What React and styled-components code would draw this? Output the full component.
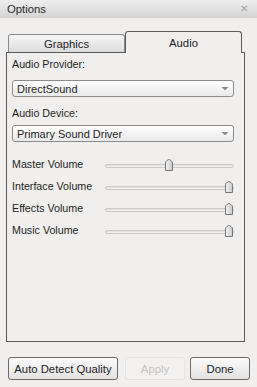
import React from "react";
import styled, { createGlobalStyle } from "styled-components";

const GlobalStyle = createGlobalStyle`
  html, body {
    margin: 0;
    padding: 0;
    background: #f0efed;
  }
  body {
    font-family: "Liberation Sans", Arial, sans-serif;
    font-size: 10.7px;
    color: #1e1e1e;
  }
`;

const Window = styled.div`
  width: 257px;
  height: 387px;
  background: #f0efed;
  display: flex;
  flex-direction: column;
`;

const TitleBar = styled.div`
  height: 18px;
  display: flex;
  align-items: center;
  justify-content: space-between;
  padding: 0 9px 0 7px;
  background: linear-gradient(#eeeeee, #d3d3d3);
  font-size: 11.3px;
  color: #2a2a2a;
`;

const Close = styled.span`
  color: #a0a0a0;
  font-size: 10px;
  line-height: 1;
`;

const TabRow = styled.div`
  height: 21px;
  margin-top: 13px;
  padding-left: 8px;
  display: flex;
  align-items: flex-end;
`;

const Tab = styled.div`
  width: 117px;
  height: ${(p) => (p.$active ? 22 : 18)}px;
  box-sizing: border-box;
  display: flex;
  align-items: center;
  justify-content: center;
  border: 1px solid ${(p) => (p.$active ? "#5a5a5a" : "#8a8a8a")};
  border-bottom: none;
  border-radius: 3px 3px 0 0;
  background: ${(p) =>
    p.$active ? "#f0efed" : "linear-gradient(#f6f6f6, #dcdcdc)"};
  margin-bottom: ${(p) => (p.$active ? -1 : 0)}px;
  padding-top: ${(p) => (p.$active ? 1 : 0)}px;
  position: relative;
  z-index: ${(p) => (p.$active ? 1 : 0)};
  font-size: 11.3px;
`;

const Panel = styled.div`
  margin-left: 6px;
  width: 239px;
  height: 290px;
  box-sizing: border-box;
  border: 1px solid #5a5a5a;
  padding: 4px 10px 0 5px;
  display: flex;
  flex-direction: column;
`;

const Label = styled.div`
  line-height: 14px;
  margin-top: ${(p) => p.$mt || 0}px;
`;

const Select = styled.div`
  height: 17px;
  box-sizing: border-box;
  margin-top: ${(p) => p.$mt || 0}px;
  border: 1px solid #8c8c8c;
  border-radius: 3px;
  background: linear-gradient(#ffffff, #e9e9e9);
  display: flex;
  align-items: center;
  justify-content: space-between;
  padding: 0 4px 0 4px;
  line-height: 14px;
  font-size: 11px;
`;

const Arrow = () => (
  <svg width="8" height="5" viewBox="0 0 8 5">
    <path d="M0.5 1 H7.5 L4.5 4 H3.5 Z" fill="#8a8a8a" />
  </svg>
);

const Sliders = styled.div`
  margin-top: 11px;
  display: flex;
  flex-direction: column;
`;

const SliderRow = styled.div`
  height: 22px;
  display: flex;
  align-items: center;
`;

const SliderLabel = styled.div`
  width: 93px;
  line-height: 14px;
`;

const Slider = styled.div`
  flex: 1;
  height: 12px;
  margin-top: 2px;
  position: relative;
`;

const Track = styled.div`
  position: absolute;
  left: 0;
  right: 0;
  top: 5px;
  height: 4px;
  box-sizing: border-box;
  border: 1px solid #cbcbcb;
  border-radius: 2px;
  background: linear-gradient(#dcdcdc, #f6f6f6);
`;

const Thumb = styled.svg`
  position: absolute;
  top: 0;
`;

const ButtonRow = styled.div`
  margin-top: 15px;
  padding-left: 8px;
  display: flex;
`;

const Button = styled.div`
  width: ${(p) => p.$w}px;
  height: 23px;
  box-sizing: border-box;
  margin-left: ${(p) => p.$ml || 0}px;
  display: flex;
  align-items: center;
  justify-content: center;
  border: 1px solid ${(p) => (p.$disabled ? "#e4e4e4" : "#6a6a6a")};
  border-radius: 3px;
  background: ${(p) =>
    p.$disabled ? "#f2f1ef" : "linear-gradient(#fbfbfb, #e2e2e2)"};
  color: ${(p) => (p.$disabled ? "#c4c4c4" : "#1e1e1e")};
  font-size: 11.3px;
`;

const volumes = [
  { name: "Master Volume", value: 0.5 },
  { name: "Interface Volume", value: 1 },
  { name: "Effects Volume", value: 1 },
  { name: "Music Volume", value: 1 },
];

const TRACK_W = 129;
const THUMB_W = 8;

const App = () => {
  return (
    <Window>
      <GlobalStyle />
      <TitleBar>
        <span>Options</span>
        <Close>✕</Close>
      </TitleBar>
      <TabRow>
        <Tab>Graphics</Tab>
        <Tab $active>Audio</Tab>
      </TabRow>
      <Panel>
        <Label>Audio Provider:</Label>
        <Select $mt={9}>
          <span>DirectSound</span>
          <Arrow />
        </Select>
        <Label $mt={9}>Audio Device:</Label>
        <Select $mt={5}>
          <span>Primary Sound Driver</span>
          <Arrow />
        </Select>
        <Sliders>
          {volumes.map((v) => (
            <SliderRow key={v.name}>
              <SliderLabel>{v.name}</SliderLabel>
              <Slider>
                <Track />
                <Thumb
                  width="8"
                  height="12"
                  viewBox="0 0 8 12"
                  style={{ left: Math.round(v.value * (TRACK_W - THUMB_W - 1)) }}
                >
                  <defs>
                    <linearGradient id="tg" x1="0" y1="0" x2="1" y2="0">
                      <stop offset="0" stopColor="#f4f4f4" />
                      <stop offset="1" stopColor="#c9c9c9" />
                    </linearGradient>
                  </defs>
                  <path
                    d="M0.5 11.5 V4 Q0.5 2.6 1.8 1.7 L3.4 0.6 H4.6 L6.2 1.7 Q7.5 2.6 7.5 4 V11.5 Z"
                    fill="url(#tg)"
                    stroke="#777"
                    strokeWidth="1"
                  />
                </Thumb>
              </Slider>
            </SliderRow>
          ))}
        </Sliders>
      </Panel>
      <ButtonRow>
        <Button $w={110}>Auto Detect Quality</Button>
        <Button $w={60} $ml={7} $disabled>
          Apply
        </Button>
        <Button $w={60} $ml={5}>
          Done
        </Button>
      </ButtonRow>
    </Window>
  );
};

export default App;
